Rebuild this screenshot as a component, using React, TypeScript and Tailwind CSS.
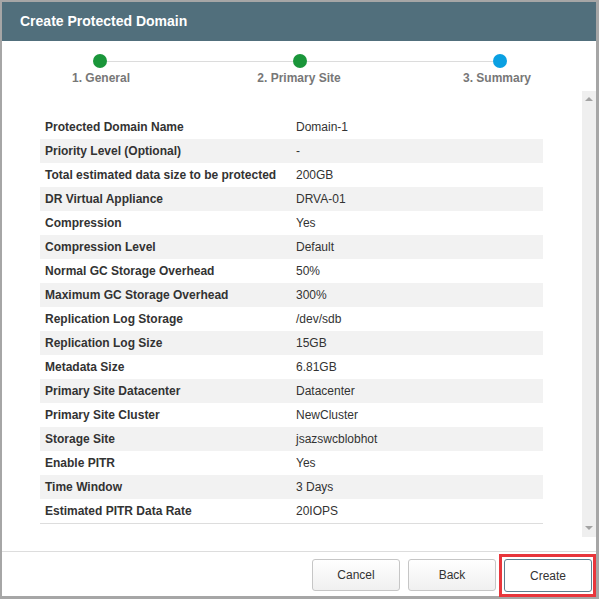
import React from "react";

const rows: [string, string][] = [
    ["Protected Domain Name", "Domain-1"],
    ["Priority Level (Optional)", "-"],
    ["Total estimated data size to be protected", "200GB"],
    ["DR Virtual Appliance", "DRVA-01"],
    ["Compression", "Yes"],
    ["Compression Level", "Default"],
    ["Normal GC Storage Overhead", "50%"],
    ["Maximum GC Storage Overhead", "300%"],
    ["Replication Log Storage", "/dev/sdb"],
    ["Replication Log Size", "15GB"],
    ["Metadata Size", "6.81GB"],
    ["Primary Site Datacenter", "Datacenter"],
    ["Primary Site Cluster", "NewCluster"],
    ["Storage Site", "jsazswcblobhot"],
    ["Enable PITR", "Yes"],
    ["Time Window", "3 Days"],
    ["Estimated PITR Data Rate", "20IOPS"],
];

const steps = [
    { label: "1. General", color: "bg-[#1a963a]" },
    { label: "2. Primary Site", color: "bg-[#1a963a]" },
    { label: "3. Summary", color: "bg-[#0aa0e2]" },
];

function Stepper() {
    return <div className="h-[50px] pt-[13px]">
        <div className="flex items-center pl-[91px]">
            <div className={`w-[14px] h-[14px] rounded-full ${steps[0].color}`} />
            <div className="w-[186px] h-px bg-[#dcdcdc]" />
            <div className={`w-[14px] h-[14px] rounded-full ${steps[1].color}`} />
            <div className="w-[186px] h-px bg-[#dcdcdc]" />
            <div className={`w-[14px] h-[14px] rounded-full ${steps[2].color}`} />
        </div>
        <div className="flex mt-[2px]">
            {steps.map(s => <div key={s.label} className="w-[199px] text-center text-[12px] leading-[16px] font-bold text-[#777777]">{s.label}</div>)}
        </div>
    </div>
}

function FakeScrollbar() {
    return <div className="w-[14px] bg-[#efefef] flex flex-col justify-between items-center pt-[6px] pb-[7px]">
        <div className="w-0 h-0 border-l-[4px] border-r-[4px] border-b-[4px] border-l-transparent border-r-transparent border-b-[#a3a3a3]" />
        <div className="w-0 h-0 border-l-[4px] border-r-[4px] border-t-[4px] border-l-transparent border-r-transparent border-t-[#a3a3a3]" />
    </div>
}

export default function App() {
    return <div className="relative w-[599px] h-[599px] bg-white border-l-2 border-t-2 border-r-[3px] border-b-[3px] border-[#a6a6a6] flex flex-col font-['Liberation_Sans',Arial,sans-serif] text-[#333333]">
        <div className="h-[39px] bg-[#516f7c] flex items-center px-[18px]">
            <span className="text-white font-bold text-[14px]">Create Protected Domain</span>
        </div>

        <Stepper />

        <div className="h-[446px] flex">
            <div className="flex-1 overflow-hidden pt-[24px] pl-[38px] pr-[39px]">
                <table className="w-full border-collapse text-[12px]">
                    <tbody>
                        {rows.map(([k, v], i) => (
                            <tr key={k} className={`h-[24px] ${i % 2 === 1 ? "bg-[#f2f2f2]" : ""} ${i === rows.length - 1 ? "border-b border-[#dddddd]" : ""}`}>
                                <td className="pl-[5px] w-[256px] font-bold">{k}</td>
                                <td>{v}</td>
                            </tr>
                        ))}
                    </tbody>
                </table>
            </div>
            <FakeScrollbar />
        </div>

        <div className="h-[14px]" />
        <div className="h-[45px] border-t border-[#dddddd] flex justify-end items-start pt-[7px] pr-[4px] gap-[8px]">
            <button className="w-[88px] h-[32px] rounded-[3px] border border-[#c6c6c6] bg-gradient-to-b from-white to-[#f0f0f0] text-[12px] text-[#333333]">Cancel</button>
            <button className="w-[88px] h-[32px] rounded-[3px] border border-[#c6c6c6] bg-gradient-to-b from-white to-[#f0f0f0] text-[12px] text-[#333333]">Back</button>
            <button className="w-[88px] h-[33px] rounded-[3px] border border-[#5d7f90] bg-white text-[12px] text-[#333333]">Create</button>
        </div>

        <div className="absolute left-[497px] top-[552px] w-[97px] h-[43px] border-[3px] border-[#e8363c] pointer-events-none" />
    </div>
}
